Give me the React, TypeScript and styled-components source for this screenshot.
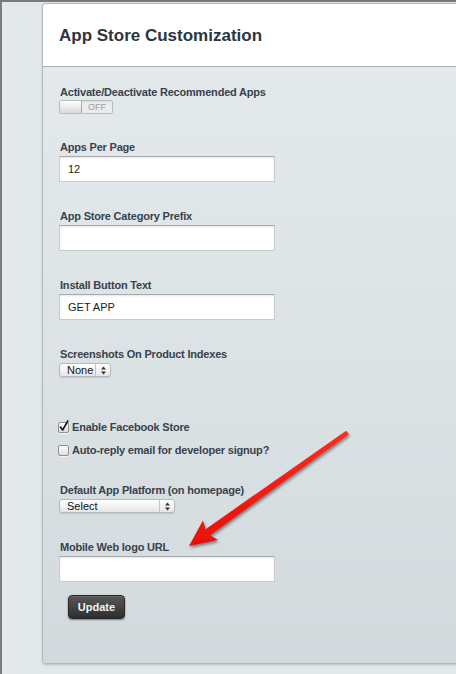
import React from "react";
import styled, { createGlobalStyle } from "styled-components";

const Global = createGlobalStyle`
  html, body { margin: 0; padding: 0; background: #e3e9eb; }
  body { font-family: "Liberation Sans", Arial, Helvetica, sans-serif; }
  * { box-sizing: border-box; }
`;

const Page = styled.div`
  position: relative;
  width: 456px;
  min-height: 674px;
  overflow: hidden;
  border-top: 2px solid #7a7a7a;
  border-left: 2px solid #7d7d7d;
  padding: 1px 0 0 40px;
  background: #e3e9eb;
`;

const Panel = styled.section`
  width: calc(100% + 20px);
  border: 1px solid #b2b9bd;
  border-right: none;
  border-radius: 4px 0 0 4px;
  overflow: hidden;
  box-shadow: 0 1px 2px rgba(0, 0, 0, 0.18);
`;

const Header = styled.header`
  height: 63px;
  background: #ffffff;
  border-bottom: 1px solid #a9b1b6;
  display: flex;
  align-items: center;
  padding-left: 16px;
`;

const Title = styled.h1`
  margin: 0;
  font-size: 17px;
  line-height: 20px;
  font-weight: bold;
  color: #2b3640;
  padding-top: 2px;
`;

const Body = styled.div`
  background: linear-gradient(#e4eaec, #d3dadd);
  padding: 18px 0 44px 17px;
  display: flex;
  flex-direction: column;
  align-items: flex-start;
`;

const Field = styled.div<{ $gap?: number }>`
  display: flex;
  flex-direction: column;
  align-items: flex-start;
  margin-bottom: ${(p) => (p.$gap ?? 27)}px;
`;

const Label = styled.label`
  font-size: 11px;
  line-height: 14px;
  font-weight: bold;
  letter-spacing: -0.2px;
  color: #37424d;
`;

const Toggle = styled.div`
  margin-top: 1px;
  margin-left: -1px;
  width: 54px;
  height: 14px;
  display: flex;
  border: 1px solid #b9bcbe;
  border-radius: 2px;
  overflow: hidden;
  background: #ececec;
  box-shadow: inset 0 1px 1px rgba(0, 0, 0, 0.08);
`;

const Knob = styled.span`
  width: 22px;
  height: 100%;
  background: linear-gradient(#ffffff, #d9d9d9);
  border-right: 1px solid #a9a9a9;
`;

const ToggleText = styled.span`
  flex: 1;
  text-align: center;
  font-size: 9px;
  line-height: 12px;
  color: #9b9b9b;
`;

const TextInput = styled.input`
  margin-top: 2px;
  margin-left: -1px;
  width: 216px;
  height: 26px;
  border: 1px solid #c9cbcc;
  border-top-color: #a8abad;
  background: #ffffff;
  box-shadow: inset 0 1px 2px rgba(0, 0, 0, 0.1);
  padding: 0 8px;
  font-family: "Liberation Sans", Arial, sans-serif;
  font-size: 11px;
  color: #1c1c1c;
  outline: none;
`;

const SelectBox = styled.div<{ $width: number }>`
  margin-top: 2px;
  margin-left: -1px;
  width: ${(p) => p.$width}px;
  height: 14px;
  display: flex;
  align-items: stretch;
  border: 1px solid #b7b9bb;
  border-radius: 3px;
  background: linear-gradient(#ffffff, #e6e6e6);
  box-shadow: 0 1px 1px rgba(0, 0, 0, 0.12);
`;

const SelectText = styled.span`
  flex: 1;
  padding-left: 7px;
  font-size: 11px;
  line-height: 12px;
  color: #111;
`;

const SelectArrows = styled.span`
  width: 15px;
  border-left: 1px solid #c4c4c4;
  display: flex;
  align-items: center;
  justify-content: center;
`;

const CheckRow = styled.label<{ $gap: number }>`
  display: flex;
  align-items: center;
  height: 16px;
  margin-left: -2px;
  margin-bottom: ${(p) => p.$gap}px;
  font-size: 11px;
  font-weight: bold;
  letter-spacing: -0.2px;
  color: #37424d;
`;

const Box = styled.span`
  position: relative;
  width: 11px;
  height: 11px;
  margin-right: 3px;
  border: 1px solid #8e9194;
  border-radius: 2px;
  background: linear-gradient(#ffffff, #dcdcdc);
  box-shadow: 0 1px 0 rgba(255, 255, 255, 0.6);
`;

const Check = styled.svg`
  position: absolute;
  left: 0px;
  top: -3px;
`;

const Button = styled.button`
  margin-top: 13px;
  margin-left: 8px;
  width: 57px;
  height: 24px;
  border: 1px solid #262626;
  border-radius: 4px;
  background: linear-gradient(#585858, #2e2e2e);
  color: #f3f3f3;
  font-family: "Liberation Sans", Arial, sans-serif;
  font-size: 11px;
  font-weight: bold;
  box-shadow: 0 1px 2px rgba(0, 0, 0, 0.45), inset 0 1px 0 rgba(255, 255, 255, 0.12);
  padding: 0;
`;

const ArrowLayer = styled.svg`
  position: absolute;
  left: 0;
  top: 0;
  pointer-events: none;
`;

const Arrows = () => (
  <svg width="7" height="9" viewBox="0 0 7 9">
    <path d="M3.5 0.5 L6 3.5 L1 3.5 Z" fill="#333" />
    <path d="M3.5 8.5 L6 5.5 L1 5.5 Z" fill="#333" />
  </svg>
);

const CheckBox = ({ checked }: { checked?: boolean }) => (
  <Box>
    {checked && (
      <Check width="10" height="12" viewBox="0 0 10 12">
        <path d="M1.5 7 L3.6 10 L8.8 1" fill="none" stroke="#111" strokeWidth="1.6" strokeLinecap="round" strokeLinejoin="round" />
      </Check>
    )}
  </Box>
);

export default function App() {
  return (
    <>
      <Global />
      <Page>
        <Panel>
          <Header>
            <Title>App Store Customization</Title>
          </Header>
          <Body>
            <Field $gap={26}>
              <Label>Activate/Deactivate Recommended Apps</Label>
              <Toggle>
                <Knob />
                <ToggleText>OFF</ToggleText>
              </Toggle>
            </Field>
            <Field>
              <Label>Apps Per Page</Label>
              <TextInput defaultValue="12" />
            </Field>
            <Field>
              <Label>App Store Category Prefix</Label>
              <TextInput defaultValue="" />
            </Field>
            <Field>
              <Label>Install Button Text</Label>
              <TextInput defaultValue="GET APP" />
            </Field>
            <Field $gap={42}>
              <Label>Screenshots On Product Indexes</Label>
              <SelectBox $width={52}>
                <SelectText>None</SelectText>
                <SelectArrows>
                  <Arrows />
                </SelectArrows>
              </SelectBox>
            </Field>
            <CheckRow $gap={7}>
              <CheckBox checked />
              Enable Facebook Store
            </CheckRow>
            <CheckRow $gap={25}>
              <CheckBox />
              Auto-reply email for developer signup?
            </CheckRow>
            <Field>
              <Label>Default App Platform (on homepage)</Label>
              <SelectBox $width={116}>
                <SelectText>Select</SelectText>
                <SelectArrows>
                  <Arrows />
                </SelectArrows>
              </SelectBox>
            </Field>
            <Field $gap={0}>
              <Label>Mobile Web logo URL</Label>
              <TextInput defaultValue="" />
            </Field>
            <Button>Update</Button>
          </Body>
        </Panel>
        <ArrowLayer width="456" height="674" viewBox="0 0 456 674">
          <defs>
            <filter id="sh" x="-20%" y="-20%" width="140%" height="140%">
              <feDropShadow dx="1" dy="2" stdDeviation="1.5" floodColor="#000" floodOpacity="0.45" />
            </filter>
            <linearGradient id="rg" x1="0" y1="0" x2="0" y2="1">
              <stop offset="0" stopColor="#ff2a1f" />
              <stop offset="1" stopColor="#e5100a" />
            </linearGradient>
          </defs>
          <polygon
            filter="url(#sh)"
            fill="url(#rg)"
            points="187,544 216,538 208.2,533.2 346.9,432.3 344.1,428.7 203.6,527.2 201,518.5"
          />
        </ArrowLayer>
      </Page>
    </>
  );
}
